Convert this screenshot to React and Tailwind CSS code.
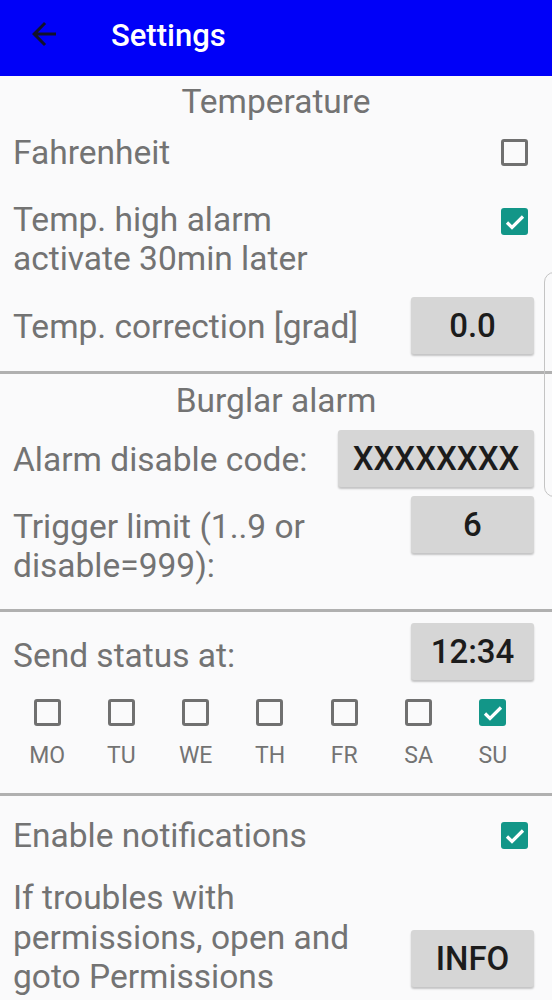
import React from "react";

const CheckBox = ({ checked }) =>
  checked ? (
    <div className="w-[27px] h-[27px] rounded-[3px] bg-[#129688] flex items-center justify-center shrink-0">
      <svg width="24" height="24" viewBox="0 0 24 24">
        <path d="M4 12.5l5 5L20 6.5" fill="none" stroke="#fff" strokeWidth="3.2" />
      </svg>
    </div>
  ) : (
    <div className="w-[27px] h-[27px] rounded-[3px] border-[3px] border-[#707070] shrink-0" />
  );

const ValueButton = ({ children, className = "" }) => (
  <div
    className={`h-[57px] rounded-[3px] bg-[#d6d6d6] shadow-[0_2px_2px_rgba(0,0,0,0.22)] flex items-center justify-center text-[33px] font-medium text-[#1c1c1c] shrink-0 ${className}`}
  >
    {children}
  </div>
);

const Divider = () => <div className="h-[3px] bg-[#b0b0b0]" />;

const days = ["MO", "TU", "WE", "TH", "FR", "SA", "SU"];

export default function App() {
  return (
    <div
      className="relative w-[552px] h-[1000px] overflow-hidden bg-[#fafafb] text-[#737373] text-[33.5px] leading-[39px]"
      style={{ fontFamily: "Roboto, 'Noto Sans', sans-serif" }}
    >
      {/* toolbar */}
      <div className="h-[76px] bg-[#0000f8] flex items-center">
        <svg width="36" height="36" viewBox="0 0 24 24" className="ml-[26px] mb-[8px]">
          <path fill="#12122a" d="M20 11H7.83l5.59-5.59L12 4l-8 8 8 8 1.41-1.41L7.83 13H20v-2z" />
        </svg>
        <h1 className="ml-[49px] mb-[6px] text-[31px] font-medium text-white">Settings</h1>
      </div>

      {/* temperature */}
      <div className="h-[50px] flex items-center justify-center">Temperature</div>
      <div className="h-[52px] flex items-center justify-between pl-[13px] pr-[24px]">
        <span>Fahrenheit</span>
        <CheckBox />
      </div>
      <div className="h-[112px] flex items-start justify-between pl-[13px] pr-[24px] pt-[22px]">
        <span>
          Temp. high alarm
          <br />
          activate 30min later
        </span>
        <div className="mt-[8px]">
          <CheckBox checked />
        </div>
      </div>
      <div className="h-[81px] flex items-start justify-between pl-[13px] pr-[18px] pt-[7px]">
        <span className="mt-[10px]">Temp. correction [grad]</span>
        <ValueButton className="w-[123px]">0.0</ValueButton>
      </div>
      <Divider />

      {/* burglar */}
      <div className="h-[52px] flex items-center justify-center">Burglar alarm</div>
      <div className="h-[66px] flex items-start justify-between pl-[13px] pr-[18px] pt-[4px]">
        <span className="mt-[10px]">Alarm disable code:</span>
        <ValueButton className="w-[196px]">XXXXXXXX</ValueButton>
      </div>
      <div className="h-[117px] flex items-start justify-between pl-[13px] pr-[18px]">
        <span className="mt-[15px]">
          Trigger limit (1..9 or
          <br />
          disable=999):
        </span>
        <ValueButton className="w-[123px] mt-[4px]">6</ValueButton>
      </div>
      <Divider />

      {/* schedule */}
      <div className="flex items-start justify-between pl-[13px] pr-[18px] pt-[11px]">
        <span className="mt-[13px]">Send status at:</span>
        <ValueButton className="w-[123px]">12:34</ValueButton>
      </div>
      <div className="ml-[10px] w-[520px] grid grid-cols-7 mt-[19px] h-[94px]">
        {days.map((d) => (
          <div key={d} className="flex flex-col items-center">
            <CheckBox checked={d === "SU"} />
            <span className="mt-[15px] text-[23px] leading-[30px]">{d}</span>
          </div>
        ))}
      </div>
      <Divider />

      {/* notifications */}
      <div className="h-[76px] flex items-center justify-between pl-[13px] pr-[24px] pt-[3px]">
        <span>Enable notifications</span>
        <CheckBox checked />
      </div>
      <div className="flex items-start justify-between pl-[13px] pr-[18px] pt-[6px] leading-[39.5px]">
        <span>
          If troubles with
          <br />
          permissions, open and
          <br />
          goto Permissions
        </span>
        <ValueButton className="w-[123px] mt-[52px]">INFO</ValueButton>
      </div>

      {/* edge panel handle */}
      <div className="absolute left-[544px] top-[272px] w-[20px] h-[225px] rounded-l-[10px] border border-[#c4c4c4]" />
    </div>
  );
}
